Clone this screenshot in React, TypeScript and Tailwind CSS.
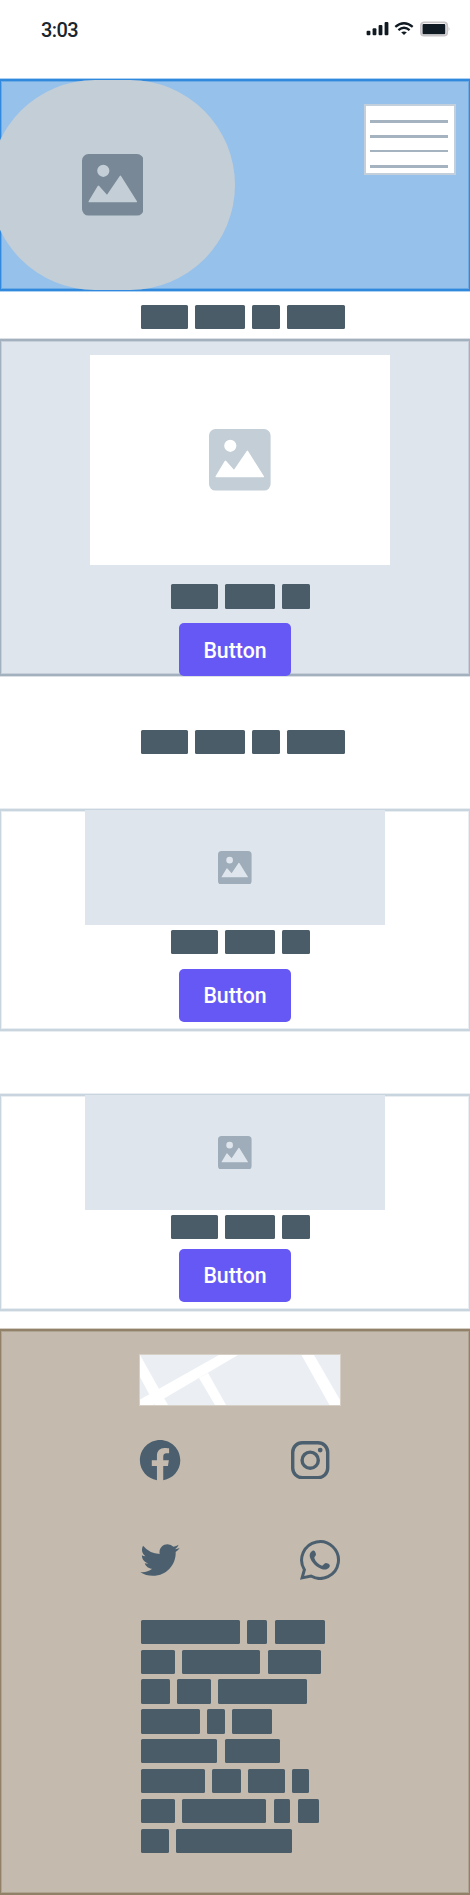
import React from "react";
import { IoLogoFacebook, IoLogoTwitter } from "react-icons/io5";

function ImageIcon({ className }: { className: string }) {
  return (
    <svg viewBox="0 0 61.6 61.6" className={className} aria-hidden="true">
      <path
        fillRule="evenodd"
        fill="currentColor"
        d="M6.5 0H55.1A6.5 6.5 0 0 1 61.6 6.5V55.1A6.5 6.5 0 0 1 55.1 61.6H6.5A6.5 6.5 0 0 1 0 55.1V6.5A6.5 6.5 0 0 1 6.5 0ZM21.3 10.7A6.1 6.1 0 1 0 21.3 22.9A6.1 6.1 0 1 0 21.3 10.7ZM7.4 48.3H54.2Q55.4 48.3 54.8 47.1L39.2 22.2Q38.4 21 37.6 22.2L25 40.7L17.2 32Q16.4 31 15.7 32L6.7 47.1Q6.2 48.3 7.4 48.3Z"
      />
    </svg>
  );
}

function InstagramIcon({ className }: { className: string }) {
  return (
    <svg viewBox="0 0 38.4 38.4" className={className} aria-hidden="true">
      <g fill="none" stroke="currentColor" strokeWidth="3.4">
        <rect x="1.7" y="1.7" width="35" height="35" rx="9.6" />
        <circle cx="19.2" cy="19.2" r="8.1" />
      </g>
      <circle cx="29.2" cy="9.1" r="2.4" fill="currentColor" />
    </svg>
  );
}

function WhatsappIcon({ className }: { className: string }) {
  return (
    <svg viewBox="0 0 40 40" className={className} aria-hidden="true">
      <path
        fill="none"
        stroke="currentColor"
        strokeWidth="3"
        d="M2.1 37.9L4.4 29.7A18.4 18.4 0 1 1 11 36.05Z"
      />
      <path
        fill="currentColor"
        d="M12.3 10.9C14 10 15 10.9 15.8 13.6C16.6 16 14.2 16.4 14.4 18.2C15.5 21.5 18.5 24.5 22 25.8C23.6 25.6 24 23 26 23.1C28.5 23.6 30.5 24.7 29.6 26.8C28.2 29.5 24.8 30.3 21.5 29C16 27 11.5 22.3 9.9 17.3C9.2 14.5 10.2 12 12.3 10.9Z"
      />
    </svg>
  );
}

function Words({ widths, className = "" }: { widths: number[]; className?: string }) {
  return (
    <div className={`flex h-[24.2px] shrink-0 gap-[7.6px] ${className}`}>
      {widths.map((w, i) => (
        <span key={i} className="h-full shrink-0 rounded-[1.5px] bg-[#4b5c69]" style={{ width: w }} />
      ))}
    </div>
  );
}

function Button({ className = "" }: { className?: string }) {
  return (
    <button
      className={`relative flex h-[53px] w-[112.6px] shrink-0 items-center justify-center rounded-[5px] bg-[#6558f5] pt-0.5 text-[21.3px] font-medium text-white ${className}`}
    >
      Button
    </button>
  );
}

function StatusBar() {
  return (
    <header className="flex h-[79px] items-start justify-between pt-[17px] pr-[20px] pl-[41px] text-[#1b252d]">
      <span className="pt-px text-[20px] leading-6 font-medium tracking-[-0.6px]">3:03</span>
      <svg width="84" height="16" viewBox="0 0 84 16" className="mt-1" aria-hidden="true">
        <g fill="#101a22">
          <rect x="0.6" y="9.8" width="3.8" height="4.4" rx="1" />
          <rect x="6.6" y="7.2" width="3.8" height="7" rx="1" />
          <rect x="12.6" y="4" width="3.8" height="10.2" rx="1" />
          <rect x="18.6" y="1" width="3.8" height="13.2" rx="1" />
          <path d="M35.2 11.2L38 14L40.8 11.2Q38 9.6 35.2 11.2Z" />
        </g>
        <g fill="none" stroke="#101a22" strokeWidth="2.3">
          <path d="M29.3 5.9Q38 -1.5 46.7 5.9" />
          <path d="M32.4 9.2Q38 4.4 43.6 9.2" />
        </g>
        <rect x="54.9" y="1.3" width="26.3" height="13.4" rx="3.2" fill="#fff" stroke="#c9c4c7" strokeWidth="1.8" />
        <path d="M82.6 5.8Q84.4 8 82.6 10.2Z" fill="#c3bec1" />
        <rect x="56.5" y="3" width="22.8" height="10.2" rx="1" fill="#101a22" />
      </svg>
    </header>
  );
}

function ProductCard({ className, buttonClass }: { className: string; buttonClass: string }) {
  return (
    <section
      className={`flex flex-col items-center border-x border-y-2 border-[#c9d5de] shadow-[0_0_0_1px_#c9d5de66,inset_0_0_0_1px_#c9d5de66] ${className}`}
    >
      <div className="relative -mt-px flex h-[115px] w-[300px] shrink-0 items-center justify-center bg-[#dfe5ed] text-[#9eadb9]">
        <ImageIcon className="size-[33.6px]" />
      </div>
      <Words widths={[46.5, 49.4, 27.5]} className="mt-[4.6px] ml-[11px]" />
      <Button className={buttonClass} />
    </section>
  );
}

function MapStrip() {
  return (
    <div className="h-[52px] w-[202px] border border-[#d5cfc5] bg-[#ebeff4]">
      <svg viewBox="0 0 200 50" className="h-full w-full" aria-hidden="true">
        <g fill="#fff">
          <path d="M79 0H98L13 50H0V44.5Z" />
          <path d="M0 0L28 50H15L0 22Z" />
          <path d="M59 23L68 18L86 50H75Z" />
          <path d="M161.5 0H174L200 45V50H189.5Z" />
        </g>
      </svg>
    </div>
  );
}

const addressLines = [
  [98.5, 19.9, 50.6],
  [33.6, 77.8, 53.3],
  [28.5, 33.6, 88.8],
  [58.4, 17.6, 39.4],
  [76.2, 54.6],
  [63.6, 28.4, 36.5, 16.5],
  [33.6, 83.7, 16.4, 21.6],
  [27.4, 115.7],
];

export default function App() {
  return (
    <main className="h-[1895px] w-[470px] overflow-hidden bg-white font-[Roboto,sans-serif]">
      <StatusBar />

      <section className="flex h-[212px] items-start justify-between border-x border-y-2 border-[#3089dc] bg-[#96c1eb] shadow-[0_0_0_1px_#3089dc66,inset_0_0_0_1px_#3089dc66]">
        <div className="-mt-[1.2px] -ml-[10.7px] flex h-[210.4px] w-[244.2px] items-center justify-center rounded-full bg-[#c3ced7] text-[#788896]">
          <ImageIcon className="size-[61.6px]" />
        </div>
        <div className="mt-[23px] mr-[13px] flex h-[71px] w-[92px] flex-col border-2 border-[#c3d0dc] bg-white pt-[14.4px] pl-1">
          <span className="h-[2.6px] w-[78px] rounded-[.1px] bg-[#a5b3c0]" />
          <span className="mt-[12px] h-[2.6px] w-[78px] rounded-[.1px] bg-[#a5b3c0]" />
          <span className="mt-[12px] h-[2.6px] w-[78px] rounded-[.1px] bg-[#a5b3c0]" />
          <span className="mt-[13.2px] h-[2.6px] w-[78px] rounded-[.1px] bg-[#a5b3c0]" />
        </div>
      </section>

      <Words widths={[46.5, 49.4, 27.5, 57.5]} className="mt-[13.7px] ml-[141.2px]" />

      <section className="mt-[10.1px] flex h-[337px] flex-col items-center border-x border-y-2 border-[#a2b1bd] bg-[#dfe5ed] shadow-[0_0_0_1px_#a2b1bd66,inset_0_0_0_1px_#a2b1bd66]">
        <div className="mt-[14px] ml-[10px] flex h-[210px] w-[300px] shrink-0 items-center justify-center bg-white text-[#c3ced7]">
          <ImageIcon className="size-[61.6px]" />
        </div>
        <Words widths={[46.5, 49.4, 27.5]} className="mt-[19.5px] ml-[11px]" />
        <Button className="mt-[14.8px]" />
      </section>

      <Words widths={[46.5, 49.4, 27.5, 57.5]} className="mt-[53.7px] ml-[141.2px]" />

      <ProductCard className="mt-[55.1px] h-[222px]" buttonClass="mt-[14.8px]" />
      <ProductCard className="mt-[63px] h-[217px]" buttonClass="mt-[9.8px]" />

      <footer className="mt-[18px] flex h-[566px] flex-col border-x border-y-2 border-[#918168] bg-[#c4bbae] pt-[23px] pl-[138px] shadow-[0_0_0_1px_#91816866,inset_0_0_0_1px_#91816866]">
        <MapStrip />
        <div className="mt-[30px] flex h-[48px] w-[202px] items-center text-[#4b5f6f]">
          <IoLogoFacebook className="-ml-[2px] size-[46.2px]" />
          <InstagramIcon className="mr-[11.4px] ml-auto size-[38.4px]" />
        </div>
        <div className="mt-[52px] flex h-[48px] w-[202px] items-center text-[#4b5f6f]">
          <IoLogoTwitter className="size-[42px]" />
          <WhatsappIcon className="mr-[0.8px] ml-auto size-[40px]" />
        </div>
        <div className="mt-[35.8px] ml-[2.2px] flex flex-col gap-[5.7px]">
          {addressLines.map((line, i) => (
            <Words key={i} widths={line} />
          ))}
        </div>
      </footer>
    </main>
  );
}
